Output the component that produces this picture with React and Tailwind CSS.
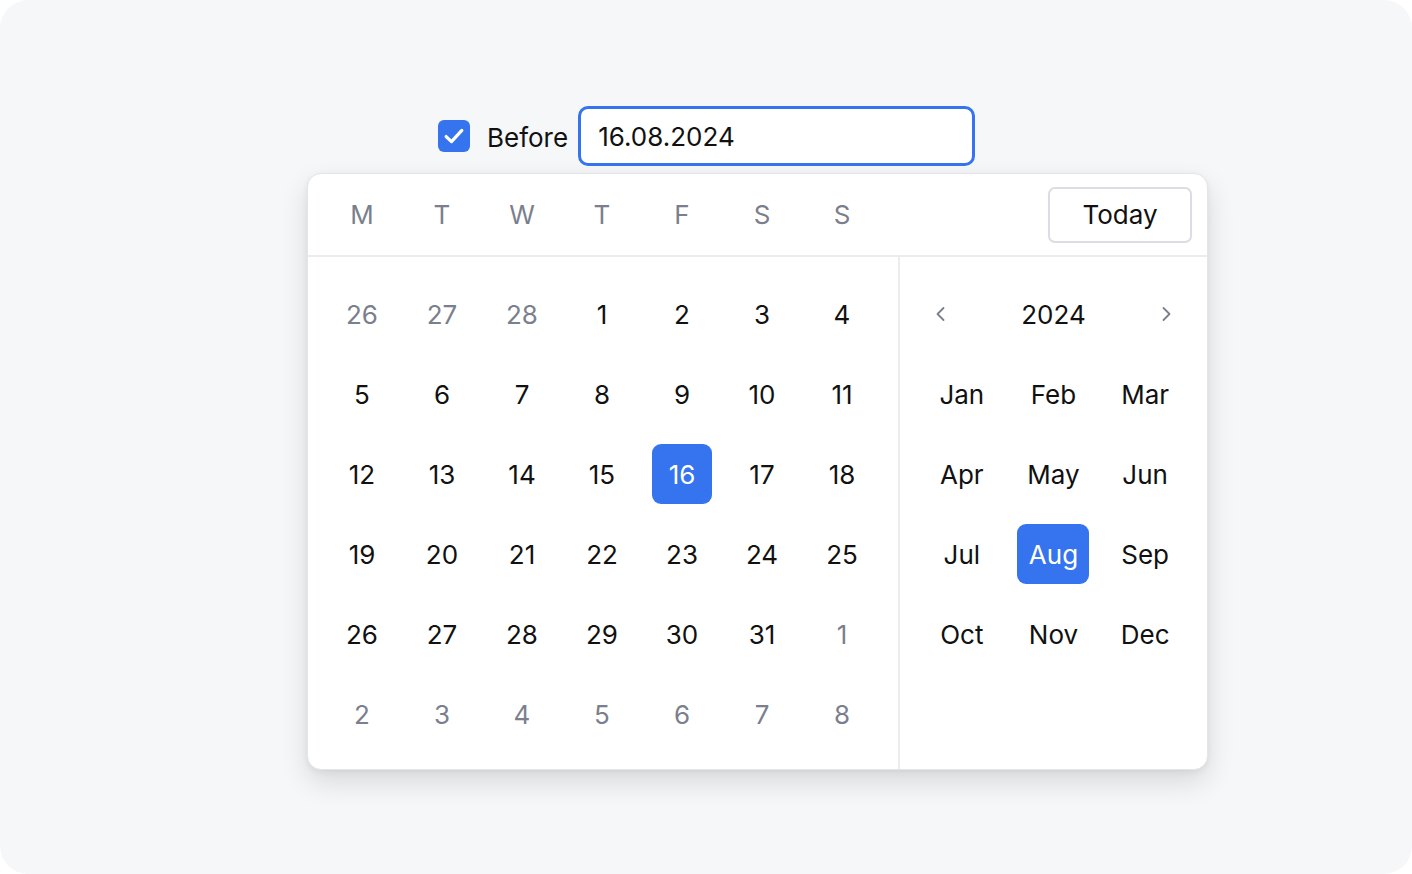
import { useState } from "react";

const weekDays = ["M", "T", "W", "T", "F", "S", "S"];
const months = ["Jan", "Feb", "Mar", "Apr", "May", "Jun", "Jul", "Aug", "Sep", "Oct", "Nov", "Dec"];

// 6 weeks shown, muted = outside August
const days = [
  ...[26, 27, 28].map((d) => ({ d, muted: true })),
  ...Array.from({ length: 31 }, (_, i) => ({ d: i + 1, muted: false })),
  ...[1, 2, 3, 4, 5, 6, 7, 8].map((d) => ({ d, muted: true })),
];

function Chevron({ dir }) {
  return (
    <svg width="14" height="18" viewBox="0 0 14 18" fill="none" className="text-[#7b7f8d]">
      <path
        d={dir === "left" ? "M9.5 3L3.5 9L9.5 15" : "M4.5 3L10.5 9L4.5 15"}
        stroke="currentColor"
        strokeWidth="1.8"
        strokeLinecap="round"
        strokeLinejoin="round"
      />
    </svg>
  );
}

export default function App() {
  const [checked, setChecked] = useState(true);
  const [selected, setSelected] = useState(16);
  const [month, setMonth] = useState("Aug");

  return (
    <div className="w-[1412px] h-[874px] bg-white font-['Inter','Liberation_Sans',sans-serif] text-[26px] text-[#111]">
      <div className="w-full h-full rounded-[28px] bg-[#f6f7f9] pt-[106px] pl-[307px]">
        {/* Field row */}
        <div className="flex items-center ml-[131px] h-[60px]">
          <button
            onClick={() => setChecked(!checked)}
            className={`w-[32px] h-[32px] rounded-[6px] flex items-center justify-center ${checked ? "bg-[#3574ee]" : "bg-white border-2 border-gray-300"}`}
          >
            {checked && (
              <svg width="28" height="28" viewBox="0 0 20 20" fill="none">
                <path d="M4.4 10.4L8.2 14L15.6 6" stroke="white" strokeWidth="2.3" strokeLinecap="round" strokeLinejoin="round" />
              </svg>
            )}
          </button>
          <span className="ml-[17px] mt-[2px]">Before</span>
          <div className="ml-[10px] w-[397px] h-[60px] rounded-[10px] border-[3px] border-[#3574ee] bg-white flex items-center pl-[17px]">
            16.08.2024
          </div>
        </div>

        {/* Popup */}
        <div className="mt-[7px] w-[901px] rounded-[14px] bg-white border border-[#e4e5e9] shadow-[0_12px_28px_rgba(0,0,0,0.12),0_2px_6px_rgba(0,0,0,0.06)] overflow-hidden">
          <div className="h-[83px] border-b-2 border-[#ececef] flex items-center">
            <div className="ml-[14px] grid grid-cols-7 w-[560px]">
              {weekDays.map((w, i) => (
                <div key={i} className="text-center text-[#7b7f8d]">
                  {w}
                </div>
              ))}
            </div>
            <button className="ml-auto mr-[15px] w-[144px] h-[56px] rounded-[7px] border-2 border-[#dcdde2] bg-white">
              Today
            </button>
          </div>

          <div className="flex">
            <div className="w-[592px] border-r-2 border-[#ececef] pl-[14px] pt-[17px] pb-[15px]">
              <div className="grid grid-cols-7 w-[560px]">
                {days.map((x, i) => {
                  const active = !x.muted && x.d === selected;
                  return (
                    <div key={i} className="h-[80px] flex items-center justify-center">
                      <button
                        onClick={() => !x.muted && setSelected(x.d)}
                        className={`w-[60px] h-[60px] rounded-[9px] flex items-center justify-center ${
                          active ? "bg-[#3574ee] text-white" : x.muted ? "text-[#7b7f8d]" : "text-[#111]"
                        }`}
                      >
                        {x.d}
                      </button>
                    </div>
                  );
                })}
              </div>
            </div>

            <div className="flex-1 px-[16px] pt-[17px]">
              <div className="h-[80px] flex items-center">
                <div className="w-[50px] pl-[18px]">
                  <Chevron dir="left" />
                </div>
                <div className="flex-1 text-center">2024</div>
                <div className="w-[50px] flex justify-end pr-[18px]">
                  <Chevron dir="right" />
                </div>
              </div>
              <div className="grid grid-cols-3">
                {months.map((m) => (
                  <div key={m} className="h-[80px] flex items-center justify-center">
                    <button
                      onClick={() => setMonth(m)}
                      className={`w-[72px] h-[60px] rounded-[9px] flex items-center justify-center ${
                        m === month ? "bg-[#3574ee] text-white" : "text-[#111]"
                      }`}
                    >
                      {m}
                    </button>
                  </div>
                ))}
              </div>
            </div>
          </div>
        </div>
      </div>
    </div>
  );
}
